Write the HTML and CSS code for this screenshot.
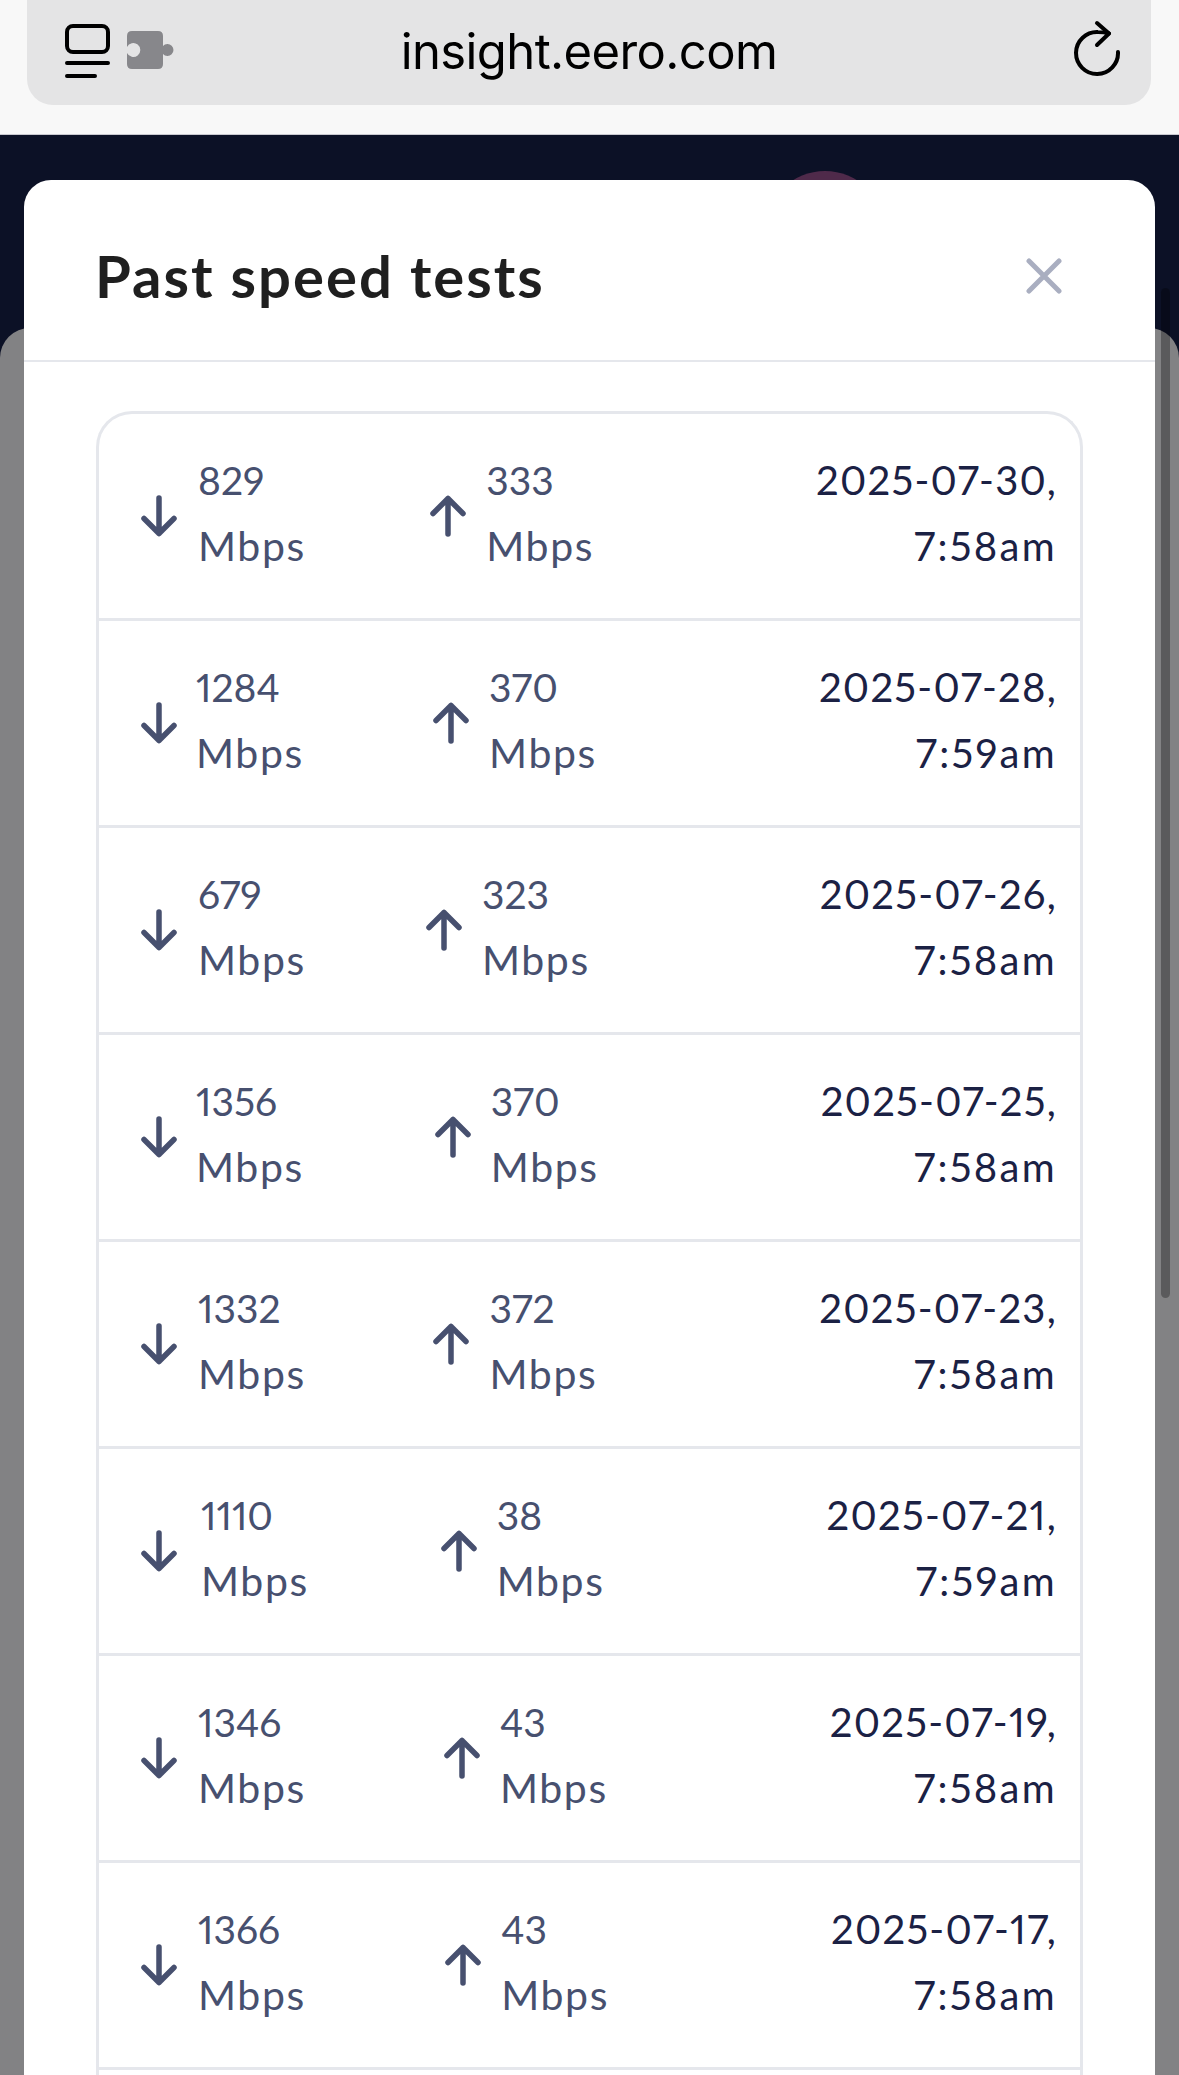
FILE: index.html
```html
<!DOCTYPE html>
<html lang="en">
<head>
<meta charset="utf-8">
<title>Past speed tests</title>
<link rel="stylesheet" href="styles.css">
</head>
<body>
<svg class="defs" width="0" height="0" aria-hidden="true">
  <symbol id="arrow-down" viewBox="0 0 36 42"><path d="M18 3V38.500M3 23.500L18 38.500L33 23.500" fill="none" stroke="currentColor" stroke-width="5.500" stroke-linecap="round" stroke-linejoin="round"/></symbol>
  <symbol id="arrow-up" viewBox="0 0 36 42"><path d="M18 39V3.500M3 18.500L18 3.500L33 18.500" fill="none" stroke="currentColor" stroke-width="5.500" stroke-linecap="round" stroke-linejoin="round"/></symbol>
</svg>
<header class="browser">
  <div class="address">
    <div class="address-tools">
      <svg class="icon-reader" viewBox="0 0 45 54" aria-hidden="true">
        <rect x="2" y="2" width="41" height="26" rx="6" fill="none" stroke="#000" stroke-width="4"/>
        <path d="M2 39H43M2 52H30" fill="none" stroke="#000" stroke-width="4" stroke-linecap="round"/>
      </svg>
      <svg class="icon-puzzle" viewBox="0 0 47 38" aria-hidden="true">
        <path d="M5 0H31Q36 0 36 5V15A6 6 0 1 1 36 23V33Q36 38 31 38H5Q0 38 0 33V22A7 7 0 1 0 0 16V5Q0 0 5 0Z" fill="#87878b"/>
      </svg>
    </div>
    <span class="url">insight.eero.com</span>
    <svg class="icon-reload" viewBox="0 0 48 58" aria-hidden="true">
      <path d="M44 32A21 21 0 1 1 24 12Q30 12 35 13.500" fill="none" stroke="#000" stroke-width="4" stroke-linecap="round"/>
      <path d="M23 3L35 13.500L23 25" fill="none" stroke="#000" stroke-width="4" stroke-linecap="round" stroke-linejoin="round"/>
    </svg>
  </div>
</header>
<main class="stage">
  <div class="avatar"></div>
  <div class="sheet"></div>
  <div class="scrollbar"></div>
  <section class="modal">
    <div class="modal-head">
      <h1>Past speed tests</h1>
      <svg class="icon-close" viewBox="0 0 36 36" aria-hidden="true"><path d="M3 3L33 33M33 3L3 33" fill="none" stroke="#a9aec0" stroke-width="5" stroke-linecap="round"/></svg>
    </div>
    <div class="modal-body">
      <ul class="tests">
        <li class="test">
          <div class="rate"><svg class="arrow"><use href="#arrow-down"/></svg><div class="val"><span class="num">829</span><span class="unit">Mbps</span></div></div>
          <div class="rate rate-up"><svg class="arrow"><use href="#arrow-up"/></svg><div class="val"><span class="num">333</span><span class="unit">Mbps</span></div></div>
          <div class="when"><span class="day">2025-07-30,</span><span class="time">7:58am</span></div>
        </li>
        <li class="test">
          <div class="rate rate-tight"><svg class="arrow"><use href="#arrow-down"/></svg><div class="val"><span class="num">1284</span><span class="unit">Mbps</span></div></div>
          <div class="rate rate-up"><svg class="arrow"><use href="#arrow-up"/></svg><div class="val"><span class="num">370</span><span class="unit">Mbps</span></div></div>
          <div class="when"><span class="day">2025-07-28,</span><span class="time">7:59am</span></div>
        </li>
        <li class="test">
          <div class="rate"><svg class="arrow"><use href="#arrow-down"/></svg><div class="val"><span class="num">679</span><span class="unit">Mbps</span></div></div>
          <div class="rate rate-up rate-up-far"><svg class="arrow"><use href="#arrow-up"/></svg><div class="val"><span class="num">323</span><span class="unit">Mbps</span></div></div>
          <div class="when"><span class="day">2025-07-26,</span><span class="time">7:58am</span></div>
        </li>
        <li class="test">
          <div class="rate rate-tight"><svg class="arrow"><use href="#arrow-down"/></svg><div class="val"><span class="num">1356</span><span class="unit">Mbps</span></div></div>
          <div class="rate rate-up"><svg class="arrow"><use href="#arrow-up"/></svg><div class="val"><span class="num">370</span><span class="unit">Mbps</span></div></div>
          <div class="when"><span class="day">2025-07-25,</span><span class="time">7:58am</span></div>
        </li>
        <li class="test">
          <div class="rate"><svg class="arrow"><use href="#arrow-down"/></svg><div class="val"><span class="num">1332</span><span class="unit">Mbps</span></div></div>
          <div class="rate rate-up"><svg class="arrow"><use href="#arrow-up"/></svg><div class="val"><span class="num">372</span><span class="unit">Mbps</span></div></div>
          <div class="when"><span class="day">2025-07-23,</span><span class="time">7:58am</span></div>
        </li>
        <li class="test">
          <div class="rate rate-wide"><svg class="arrow"><use href="#arrow-down"/></svg><div class="val"><span class="num">1110</span><span class="unit">Mbps</span></div></div>
          <div class="rate rate-up"><svg class="arrow"><use href="#arrow-up"/></svg><div class="val"><span class="num">38</span><span class="unit">Mbps</span></div></div>
          <div class="when"><span class="day">2025-07-21,</span><span class="time">7:59am</span></div>
        </li>
        <li class="test">
          <div class="rate"><svg class="arrow"><use href="#arrow-down"/></svg><div class="val"><span class="num">1346</span><span class="unit">Mbps</span></div></div>
          <div class="rate rate-up"><svg class="arrow"><use href="#arrow-up"/></svg><div class="val"><span class="num">43</span><span class="unit">Mbps</span></div></div>
          <div class="when"><span class="day">2025-07-19,</span><span class="time">7:58am</span></div>
        </li>
        <li class="test">
          <div class="rate"><svg class="arrow"><use href="#arrow-down"/></svg><div class="val"><span class="num">1366</span><span class="unit">Mbps</span></div></div>
          <div class="rate rate-up"><svg class="arrow"><use href="#arrow-up"/></svg><div class="val"><span class="num">43</span><span class="unit">Mbps</span></div></div>
          <div class="when"><span class="day">2025-07-17,</span><span class="time">7:58am</span></div>
        </li>
        <li class="test"></li>
      </ul>
    </div>
  </section>
</main>
</body>
</html>
```
FILE: styles.css
```css
* { box-sizing: border-box; }
html, body { margin: 0; height: 100%; overflow: hidden; }
body { background: #0c1126; font-family: "Lato", sans-serif; font-variant-numeric: proportional-nums; display: flex; flex-direction: column; }
.defs { position: absolute; }

.browser { height: 135px; flex: none; background: #f8f8f8; border-bottom: 1px solid #c9c9d0; padding: 0 28px 29px 27px; }
.address { height: 105px; background: #e4e4e5; border-radius: 0 0 26px 26px; display: flex; align-items: center; position: relative; padding: 0 29px 0 38px; justify-content: space-between; }
.address-tools { display: flex; gap: 17px; align-items: center; }
.icon-reader { width: 45px; height: 54px; display: block; margin-top: -3px; }
.icon-puzzle { width: 47px; height: 38px; display: block; margin-top: -5px; }
.url { position: absolute; left: 0; right: 0; top: 27px; text-align: center; font: 400 49px/1 "Inter", sans-serif; color: #000; letter-spacing: -0.6px; }
.icon-reload { width: 48px; height: 58px; display: block; margin-top: -7px; }

.stage { flex: 1; position: relative; overflow: hidden; padding: 45px 24px 0; }
.avatar { position: absolute; left: 765px; top: 36px; width: 120px; height: 120px; border-radius: 50%; background: #4f2a4a; }
.sheet { position: absolute; left: 0; right: 0; top: 193px; bottom: 0; border-radius: 30px 30px 0 0; background: #828284; }
.scrollbar { position: absolute; right: 9px; top: 153px; width: 9px; height: 1010px; border-radius: 4.5px; background: rgba(0, 0, 0, 0.3); }

.modal { position: relative; height: 100%; background: #fff; border-radius: 27px 27px 0 0; }
.modal-head { height: 182px; border-bottom: 2px solid #e5e7ec; padding: 12px 93px 0 71px; display: flex; align-items: center; justify-content: space-between; }
h1 { margin: 0; font-size: 58px; line-height: 1; font-weight: 700; letter-spacing: 2px; color: #1f1f1f; }
.icon-close { width: 36px; height: 36px; display: block; }
.modal-body { padding: 49px 72px 0; }
.tests { list-style: none; margin: 0; padding: 0; border: 3px solid #e5e7ec; border-bottom: 0; border-radius: 36px 36px 0 0; }
.test { height: 207px; border-bottom: 3px solid #e5e7ec; padding: 0 23px 0 42px; display: flex; align-items: center; font-size: 39px; line-height: 66px; }
.rate { display: flex; align-items: center; gap: 21px; color: #47506f; }
.rate-tight { gap: 19px; }
.rate-wide { gap: 24px; }
.rate-up { margin-left: auto; margin-right: 222px; gap: 20px; }
.rate-up-far { margin-right: 230px; }
.arrow { width: 36px; height: 42px; flex: none; display: block; }
.val { display: flex; flex-direction: column; padding-bottom: 6px; }
.unit { font-size: 41px; letter-spacing: 1.6px; }
.when { display: flex; flex-direction: column; align-items: flex-end; padding-bottom: 6px; font-size: 40px; color: #1b2144; }
.day { letter-spacing: 1.25px; }
.time { letter-spacing: 2.3px; }
```
